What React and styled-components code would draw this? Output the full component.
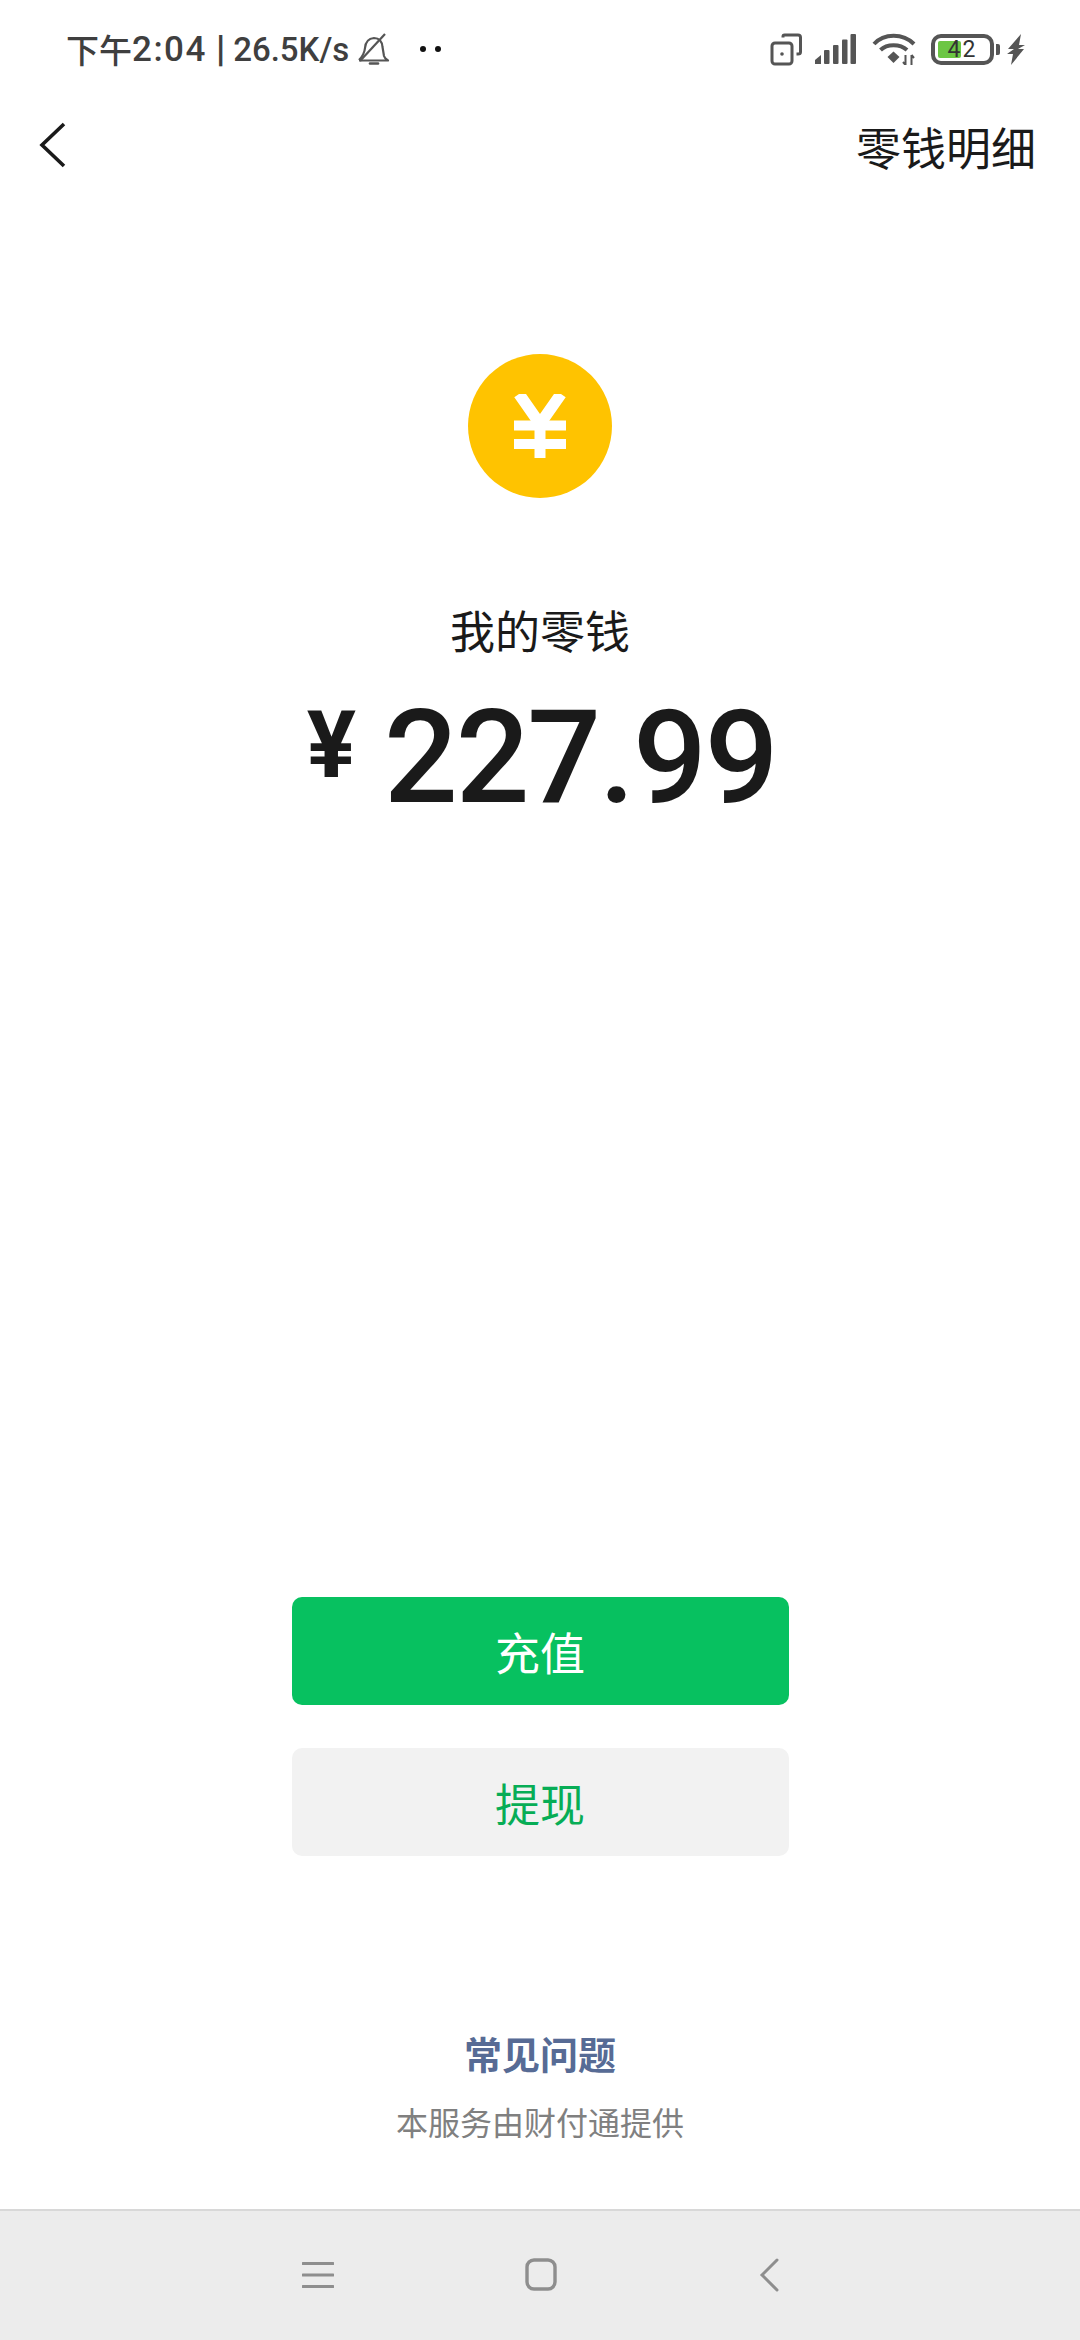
import React from "react";
import styled, { createGlobalStyle } from "styled-components";

const GlobalStyle = createGlobalStyle`
    html, body {
        margin: 0;
        padding: 0;
        background: #fff;
    }
    * {
        box-sizing: border-box;
    }
`;

const CJK = `Roboto, "Noto Sans CJK SC", sans-serif`;

const App = () => {
    return (
        <Page>
            <GlobalStyle />
            <StatusBar>
                <StatusLeft>
                    <span>下午</span>
                    <Clock>2:04</Clock>
                    <Divider>|</Divider>
                    <Speed>26.5K/s</Speed>
                    <BellIcon />
                    <Dots>
                        <Dot />
                        <Dot />
                    </Dots>
                </StatusLeft>
                <StatusRight>
                    <RotateIcon />
                    <SignalIcon />
                    <WifiIcon />
                    <BatteryWrap>
                        <Battery>
                            <BatteryFill $level={42} />
                            <BatteryText>42</BatteryText>
                        </Battery>
                        <BatteryNub />
                    </BatteryWrap>
                    <BoltIcon />
                </StatusRight>
            </StatusBar>

            <NavBar>
                <BackIcon width="28" height="46" viewBox="0 0 28 46" fill="none">
                    <path d="M25 2 L3 23 L25 44" stroke="#1a1a1a" strokeWidth="3.6" />
                </BackIcon>
                <NavTitle>零钱明细</NavTitle>
            </NavBar>

            <Main>
                <Coin>
                    <svg width="52" height="64" viewBox="0 0 52 64" fill="none">
                        <path d="M5 0 L26 30 L47 0" stroke="#fff" strokeWidth="11.500" />
                        <path d="M0 31.500 H52 M0 50 H52" stroke="#fff" strokeWidth="10" />
                        <path d="M26 28 V64" stroke="#fff" strokeWidth="11" />
                    </svg>
                </Coin>
                <Label>我的零钱</Label>
                <AmountRow>
                    <Currency>¥</Currency>
                    <Amount>227.99</Amount>
                </AmountRow>

                <Actions>
                    <Button $primary>充值</Button>
                    <Button>提现</Button>
                </Actions>

                <Footer>
                    <FaqLink>常见问题</FaqLink>
                    <Provider>本服务由财付通提供</Provider>
                </Footer>
            </Main>

            <SystemBar>
                <svg width="32" height="28" viewBox="0 0 32 28" fill="none">
                    <path d="M1 2.500 H31 M1 14 H31 M1 25.500 H31" stroke="#8e8e8e" strokeWidth="3" strokeLinecap="round" />
                </svg>
                <svg width="32" height="33" viewBox="0 0 32 33" fill="none">
                    <rect x="2" y="2" width="28" height="29" rx="7" stroke="#8e8e8e" strokeWidth="3.400" />
                </svg>
                <SystemBack width="20" height="34" viewBox="0 0 20 34" fill="none">
                    <path d="M18 2 L3 17 L18 32" stroke="#8e8e8e" strokeWidth="3" strokeLinecap="round" />
                </SystemBack>
            </SystemBar>
        </Page>
    );
};

export default App;

const BellIcon = () => (
    <BellSvg width="33" height="33" viewBox="0 0 33 33" fill="none">
        <path
            d="M2 27 C6 23 7.500 20 8 15 C8.500 9 12 5.500 17 5 C22 5 25 8.500 25.500 14 L27 23 C27.500 25 29 26 31 27.500 H2"
            stroke="#555"
            strokeWidth="2.200"
            strokeLinejoin="round"
        />
        <path d="M3 28 L28 1" stroke="#555" strokeWidth="2.200" />
        <path d="M13 30.500 H21" stroke="#555" strokeWidth="2.600" strokeLinecap="round" />
    </BellSvg>
);

const RotateIcon = () => (
    <IconBox $width={32} $right={13}>
        <svg width="32" height="33" viewBox="0 0 32 33" fill="none">
            <rect x="2" y="10" width="20" height="21" rx="3" stroke="#555" strokeWidth="3" />
            <circle cx="12" cy="21" r="1.800" fill="#555" />
            <path d="M13 4.500 V3.500 C13 2.500 13.500 2 14.500 2 H28 C29.500 2 30.500 3 30.500 4.500 V19 C30.500 20.500 29.500 21 28 21 H26.500" stroke="#555" strokeWidth="3" />
        </svg>
    </IconBox>
);

const SignalIcon = () => (
    <IconBox $width={41} $right={16}>
        <svg width="41" height="30" viewBox="0 0 41 30" fill="#555">
            <path d="M0 30 V26 L6 21 V30 Z" />
            <rect x="9" y="16" width="5.500" height="14" rx="1" />
            <rect x="18" y="11" width="5.500" height="19" rx="1" />
            <rect x="27" y="5.500" width="5.500" height="24.500" rx="1" />
            <rect x="35.500" y="0" width="5.500" height="30" rx="1" />
        </svg>
    </IconBox>
);

const WifiIcon = () => (
    <IconBox $width={44} $right={15}>
        <svg width="44" height="32" viewBox="0 0 44 32" fill="none">
            <path d="M2 11 C12 0 31 0 42 11" stroke="#555" strokeWidth="4" />
            <path d="M8.500 17 C15 10.500 28 10.500 35 17" stroke="#555" strokeWidth="4" />
            <path d="M15.500 24 L21.500 18.500 L27.500 24 L21.500 30 Z" fill="#555" />
            <path d="M33.500 22 V32 M31 29 L33.500 32 M39.500 32 V22 M39.500 22 L42 25" stroke="#555" strokeWidth="2" />
        </svg>
    </IconBox>
);

const BoltIcon = () => (
    <IconBox $width={18} $left={7}>
        <svg width="18" height="31" viewBox="0 0 18 31" fill="#555">
            <path d="M14 0 L1 15 L7 15 L0 20 H6 L4 31 L17 15 H11 L18 11 H12 Z" />
        </svg>
    </IconBox>
);

const Page = styled.div`
    display: flex;
    flex-direction: column;
    width: 1080px;
    height: 2340px;
    background: #fff;
    overflow: hidden;
    font-family: ${CJK};
`;

const StatusBar = styled.div`
    display: flex;
    align-items: center;
    justify-content: space-between;
    height: 98px;
    padding: 0 55px 0 66px;
    flex-shrink: 0;
`;

const StatusLeft = styled.div`
    display: flex;
    align-items: center;
    color: #3f3f3f;
    font-size: 33px;
    font-weight: 500;
`;

const Clock = styled.span`
    font-size: 35px;
    letter-spacing: 1.500px;
`;

const Divider = styled.span`
    margin: 0 8px 0 9px;
    font-size: 36px;
    font-weight: 900;
`;

const Speed = styled.span`
    font-size: 33px;
`;

const BellSvg = styled.svg`
    margin-left: 8px;
`;

const Dots = styled.div`
    display: flex;
    gap: 9px;
    margin-left: 30px;
`;

const Dot = styled.span`
    width: 6px;
    height: 6px;
    border-radius: 50%;
    background: #111;
`;

const StatusRight = styled.div`
    display: flex;
    align-items: center;
`;

const IconBox = styled.div`
    display: flex;
    width: ${(props) => props.$width}px;
    margin-right: ${(props) => props.$right || 0}px;
    margin-left: ${(props) => props.$left || 0}px;
`;

const BatteryWrap = styled.div`
    display: flex;
    align-items: center;
    gap: 2px;
`;

const Battery = styled.div`
    position: relative;
    display: flex;
    align-items: center;
    justify-content: center;
    width: 63px;
    height: 31px;
    border: 4px solid #555;
    border-radius: 10px;
    overflow: hidden;
`;

const BatteryFill = styled.div`
    position: absolute;
    left: 3px;
    top: 3px;
    bottom: 3px;
    width: ${(props) => props.$level}%;
    background: #6cc644;
    border-radius: 2px;
`;

const BatteryText = styled.span`
    position: relative;
    font-size: 23px;
    font-weight: 400;
    letter-spacing: 2px;
    color: #333;
`;

const BatteryNub = styled.div`
    width: 4px;
    height: 11px;
    background: #555;
    border-radius: 0 2px 2px 0;
`;

const NavBar = styled.div`
    display: flex;
    align-items: center;
    justify-content: space-between;
    height: 96px;
    padding: 0 44px 0 39px;
    flex-shrink: 0;
`;

const BackIcon = styled.svg`
    margin-bottom: 2px;
`;

const NavTitle = styled.div`
    font-size: 45px;
    color: #1a1a1a;
`;

const Main = styled.div`
    display: flex;
    flex-direction: column;
    align-items: center;
    flex: 1;
`;

const Coin = styled.div`
    display: flex;
    align-items: center;
    justify-content: center;
    width: 144px;
    height: 144px;
    margin-top: 160px;
    border-radius: 50%;
    background: #ffc300;
`;

const Label = styled.div`
    margin-top: 106px;
    font-size: 45px;
    line-height: 60px;
    color: #1a1a1a;
`;

const AmountRow = styled.div`
    display: flex;
    align-items: flex-start;
    gap: 28px;
    margin-top: 24px;
    padding-left: 3px;
    color: #1a1a1a;
`;

const Currency = styled.span`
    margin-top: 8px;
    font-size: 92px;
    font-weight: 700;
    line-height: 100px;
`;

const Amount = styled.span`
    font-size: 130px;
    font-weight: 500;
    line-height: 140px;
    letter-spacing: -2.200px;
`;

const Actions = styled.div`
    display: flex;
    flex-direction: column;
    gap: 43px;
    margin-top: auto;
`;

const Button = styled.div`
    display: flex;
    align-items: center;
    justify-content: center;
    width: 497px;
    height: 108px;
    border-radius: 10px;
    font-size: 45px;
    background: ${(props) => (props.$primary ? "#07c160" : "#f2f2f2")};
    color: ${(props) => (props.$primary ? "#fff" : "#07ad56")};
`;

const Footer = styled.div`
    display: flex;
    flex-direction: column;
    align-items: center;
    margin-top: 175px;
    padding-bottom: 65px;
`;

const FaqLink = styled.div`
    font-size: 38px;
    font-weight: 700;
    line-height: 50px;
    color: #576b95;
`;

const Provider = styled.div`
    margin-top: 23px;
    font-size: 32px;
    line-height: 40px;
    color: #808080;
`;

const SystemBar = styled.div`
    display: flex;
    align-items: center;
    justify-content: center;
    gap: 191px;
    height: 131px;
    padding-bottom: 2px;
    flex-shrink: 0;
    background: #ececec;
    border-top: 2px solid #d8d8d8;
`;

const SystemBack = styled.svg`
    margin-left: 11px;
`;
